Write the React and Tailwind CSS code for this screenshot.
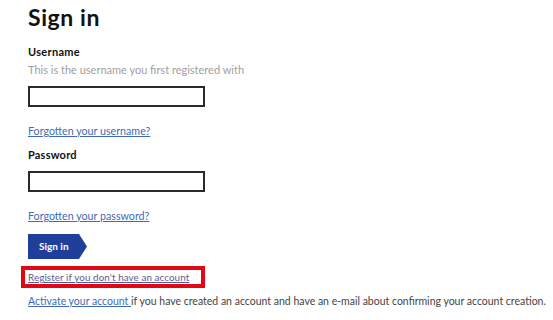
export default function App() {
  return (
    <div className="w-[553px] h-[320px] bg-white overflow-hidden pl-[28px] text-[#333]" style={{ fontFamily: "Lato, 'Noto Sans', sans-serif" }}>
      <h1 className="mt-[3px] h-[28px] leading-[28px] text-[23px] tracking-[0.6px] font-bold text-[#111]">Sign in</h1>
      <div className="mt-[13px] h-[16px] leading-[16px] text-[11px] tracking-[0.3px] font-bold text-[#111]">Username</div>
      <div className="mt-[2px] h-[16px] leading-[16px] text-[11px] text-[#a0a0a0]">This is the username you first registered with</div>
      <div className="mt-[8px] w-[177px] h-[21px] border-2 border-[#2a2a2a] bg-white"></div>
      <div className="mt-[16px] h-[16px] leading-[16px] text-[10.7px]">
        <a href="#" className="text-[#3d6cb5] underline">Forgotten your username?</a>
      </div>
      <div className="mt-[8px] h-[16px] leading-[16px] text-[11px] tracking-[0.2px] font-bold text-[#111]">Password</div>
      <div className="mt-[8px] w-[177px] h-[21px] border-2 border-[#2a2a2a] bg-white"></div>
      <div className="mt-[16px] h-[16px] leading-[16px] text-[10.7px]">
        <a href="#" className="text-[#3d6cb5] underline">Forgotten your password?</a>
      </div>
      <div className="mt-[10px] w-[59px] h-[25px] bg-[#1f3f9a] text-white text-[10px] font-bold flex items-center pl-[11px] [clip-path:polygon(0_0,calc(100%-8px)_0,100%_50%,calc(100%-8px)_100%,0_100%)]">Sign in</div>
      <div className="mt-[7px] -ml-[7px] w-[184px] h-[22px] border-4 border-[#e30613] pl-[3px] leading-[14px] text-[9.8px] tracking-[0.1px] whitespace-nowrap">
        <a href="#" className="text-[#5c5a90] underline">Register if you don't have an account</a>
      </div>
      <div className="mt-[5px] h-[16px] leading-[16px] text-[10.5px] whitespace-nowrap text-[#444]">
        <a href="#" className="text-[#3d6cb5] underline">Activate your account </a>if you have created an account and have an e-mail about confirming your account creation.
      </div>
    </div>
  );
}
